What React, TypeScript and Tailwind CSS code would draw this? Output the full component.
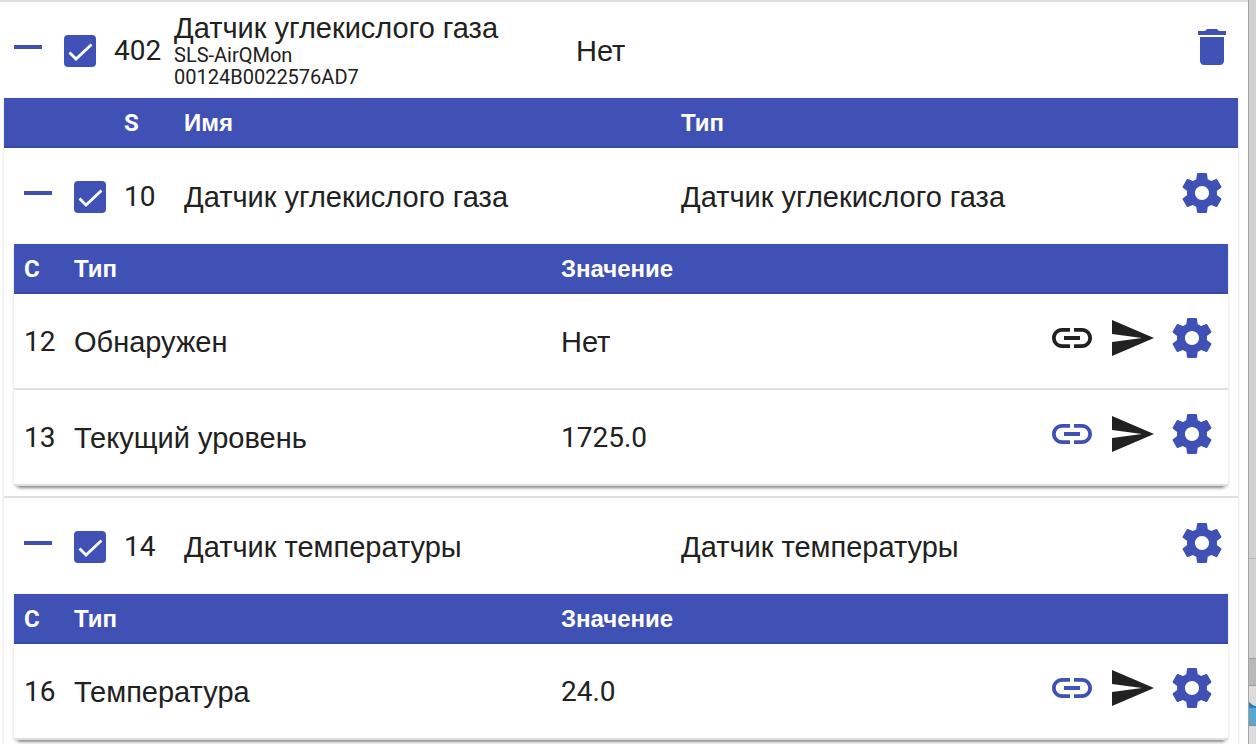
import { Fragment, type ReactNode } from 'react';
import { MdDelete, MdLink, MdRemove, MdSend } from 'react-icons/md';

type Channel = { id: number; type: string; value: string; linked: boolean };
type Sensor = { id: number; name: string; type: string; channels: Channel[] };

const sensors: Sensor[] = [
  {
    id: 10,
    name: 'Датчик углекислого газа',
    type: 'Датчик углекислого газа',
    channels: [
      { id: 12, type: 'Обнаружен', value: 'Нет', linked: false },
      { id: 13, type: 'Текущий уровень', value: '1725.0', linked: true }
    ]
  },
  {
    id: 14,
    name: 'Датчик температуры',
    type: 'Датчик температуры',
    channels: [{ id: 16, type: 'Температура', value: '24.0', linked: true }]
  }
];

const latin = "font-['Roboto',sans-serif]";
const cyrillic = "font-['Liberation_Sans',sans-serif]";

const isCyrillic = (text: string) => /[а-я]/i.test(text);

function SettingsIcon() {
  return (
    <svg viewBox="0 0 24 24" className="size-12" fill="currentColor" aria-hidden>
      <path d="M19.43 12.98c.04-.32.07-.64.07-.98s-.03-.66-.07-.98l2.11-1.65c.19-.15.24-.42.12-.64l-2-3.46c-.12-.22-.39-.3-.61-.22l-2.49 1c-.52-.4-1.08-.73-1.69-.98l-.38-2.65C14.46 2.18 14.25 2 14 2h-4c-.25 0-.46.18-.49.42l-.38 2.65c-.61.25-1.17.59-1.69.98l-2.49-1c-.23-.09-.49 0-.61.22l-2 3.46c-.13.22-.07.49.12.64l2.11 1.65c-.04.32-.07.65-.07.98s.03.66.07.98l-2.11 1.65c-.19.15-.24.42-.12.64l2 3.46c.12.22.39.3.61.22l2.49-1c.52.4 1.08.73 1.69.98l.38 2.65c.03.24.24.42.49.42h4c.25 0 .46-.18.49-.42l.38-2.65c.61-.25 1.17-.59 1.69-.98l2.49 1c.23.09.49 0 .61-.22l2-3.46c.12-.22.07-.49-.12-.64l-2.11-1.65zM12 15.5c-1.93 0-3.5-1.57-3.5-3.5s1.57-3.5 3.5-3.5 3.5 1.57 3.5 3.5-1.57 3.5-3.5 3.5z" />
    </svg>
  );
}

function IconButton({ label, dark, children }: { label: string; dark?: boolean; children: ReactNode }) {
  return (
    <button type="button" aria-label={label} className={dark ? 'block text-[#212121]' : 'block text-[#3f51b5]'}>
      {children}
    </button>
  );
}

function Checkbox({ label }: { label: string }) {
  return (
    <label className="grid size-8">
      <input
        type="checkbox"
        defaultChecked
        aria-label={label}
        className="peer col-start-1 row-start-1 size-8 appearance-none rounded-[4px] border-4 border-[#3f51b5] checked:bg-[#3f51b5]"
      />
      <svg
        viewBox="0 0 32 32"
        className="pointer-events-none col-start-1 row-start-1 hidden size-8 peer-checked:block"
        fill="none"
        stroke="#fff"
        strokeWidth="2.8"
        aria-hidden
      >
        <path d="M5.5 17.5L12 24L27.5 9.5" />
      </svg>
    </label>
  );
}

function HeadCell({ children }: { children?: string }) {
  return (
    <th className="h-[50px] border-b-2 border-[#3949a3] bg-[#3f51b5] px-2.5 text-left text-2xl font-bold text-white">
      {children && <span className={isCyrillic(children) ? cyrillic : latin}>{children}</span>}
    </th>
  );
}

function TextCell({ children }: { children: string }) {
  return (
    <td className={`px-2.5 pt-0.5 ${isCyrillic(children) ? `text-[29px] ${cyrillic}` : `text-[28px] ${latin}`}`}>
      {children}
    </td>
  );
}

function IdCell({ id }: { id: number }) {
  return <td className={`pt-0.5 pl-2.5 ${latin}`}>{id}</td>;
}

function ChannelTable({ channels }: { channels: Channel[] }) {
  return (
    <table className="w-full table-fixed border-separate border-spacing-0 bg-white shadow-[0_6px_3px_-4px_rgba(0,0,0,0.4),0_1px_3px_rgba(0,0,0,0.16)]">
      <colgroup>
        <col className="w-[50px]" />
        <col />
        <col />
        <col className="w-[190px]" />
      </colgroup>
      <thead>
        <tr>
          <HeadCell>C</HeadCell>
          <HeadCell>Тип</HeadCell>
          <HeadCell>Значение</HeadCell>
          <HeadCell />
        </tr>
      </thead>
      <tbody>
        {channels.map((c) => (
          <tr key={c.id} className="*:border-b-2 *:border-[#e0e0e0]">
            <IdCell id={c.id} />
            <TextCell>{c.type}</TextCell>
            <TextCell>{c.value}</TextCell>
            <td className="h-24 pr-3 pb-1.5">
              <div className="flex justify-end gap-3">
                <IconButton label="Связь" dark={!c.linked}>
                  <MdLink className="size-12" />
                </IconButton>
                <IconButton label="Отправить" dark>
                  <MdSend className="size-12" />
                </IconButton>
                <IconButton label="Настройки">
                  <SettingsIcon />
                </IconButton>
              </div>
            </td>
          </tr>
        ))}
      </tbody>
    </table>
  );
}

function SensorTable() {
  return (
    <table className="w-full table-fixed border-separate border-spacing-0 bg-white shadow-[0_6px_3px_-4px_rgba(0,0,0,0.4),0_1px_3px_rgba(0,0,0,0.16)]">
      <colgroup>
        <col className="w-[60px]" />
        <col className="w-[50px]" />
        <col className="w-[60px]" />
        <col />
        <col />
        <col className="w-[70px]" />
      </colgroup>
      <thead>
        <tr>
          <HeadCell />
          <HeadCell />
          <HeadCell>S</HeadCell>
          <HeadCell>Имя</HeadCell>
          <HeadCell>Тип</HeadCell>
          <HeadCell />
        </tr>
      </thead>
      <tbody>
        {sensors.map((s) => (
          <Fragment key={s.id}>
            <tr>
              <td className="h-24 pb-1.5 pl-2.5">
                <IconButton label="Свернуть">
                  <MdRemove className="size-12" />
                </IconButton>
              </td>
              <td className="pt-0.5 pl-2.5">
                <Checkbox label={s.name} />
              </td>
              <IdCell id={s.id} />
              <TextCell>{s.name}</TextCell>
              <TextCell>{s.type}</TextCell>
              <td className="pr-3 pb-1.5">
                <div className="flex justify-end">
                  <IconButton label="Настройки">
                    <SettingsIcon />
                  </IconButton>
                </div>
              </td>
            </tr>
            <tr>
              <td colSpan={6} className="border-b-2 border-[#e0e0e0] px-2.5 pb-2.5">
                <ChannelTable channels={s.channels} />
              </td>
            </tr>
          </Fragment>
        ))}
      </tbody>
    </table>
  );
}

// the sliver of the window that shows behind the page
function BackdropEdge() {
  return (
    <div className="flex w-2 shrink-0 flex-col border-l border-[#a3a3a3] bg-[#dcdcdc]">
      <div className="h-[559px] border-b border-[#b5b5b5] bg-[#d1d1d1]" />
      <div className="h-[99px] bg-[#d1d1d1]" />
      <div className="h-7 border-y border-[#9c9c9c] bg-[#b9b9b9]" />
      <div className="h-4" />
      <svg viewBox="0 0 7 6" className="h-1.5 w-full" preserveAspectRatio="none" aria-hidden>
        <path d="M0 0C3 2 4 4 7 4V6H0z" fill="#2d7fb4" />
      </svg>
      <div className="h-[18px] border-b border-[#8a8a8a] bg-[#58a8d0]" />
    </div>
  );
}

export default function App() {
  return (
    <div className="flex h-screen overflow-hidden bg-white text-[28px] leading-8 text-[#212121]">
      <main className="min-w-0 flex-1">
        <table className="w-full table-fixed border-separate border-spacing-0 border-t-2 border-[#e0e0e0]">
          <colgroup>
            <col className="w-[54px]" />
            <col className="w-[50px]" />
            <col className="w-[60px]" />
            <col />
            <col />
            <col className="w-[280px]" />
          </colgroup>
          <tbody>
            <tr>
              <td className="h-24 pb-1.5 pl-1">
                <IconButton label="Свернуть">
                  <MdRemove className="size-12" />
                </IconButton>
              </td>
              <td className="pt-0.5 pl-2.5">
                <Checkbox label="Датчик углекислого газа" />
              </td>
              <IdCell id={402} />
              <td className="px-2.5">
                <div className={`text-[29px] ${cyrillic}`}>Датчик углекислого газа</div>
                <div className={`text-xl leading-[22px] ${latin}`}>SLS-AirQMon</div>
                <div className={`text-xl leading-[22px] ${latin}`}>00124B0022576AD7</div>
              </td>
              <TextCell>Нет</TextCell>
              <td className="pr-3 pb-1.5">
                <div className="flex justify-end">
                  <IconButton label="Удалить">
                    <MdDelete className="size-12" />
                  </IconButton>
                </div>
              </td>
            </tr>
            <tr>
              <td colSpan={6} className="pr-2.5 pl-1">
                <SensorTable />
              </td>
            </tr>
          </tbody>
        </table>
      </main>
      <BackdropEdge />
    </div>
  );
}
